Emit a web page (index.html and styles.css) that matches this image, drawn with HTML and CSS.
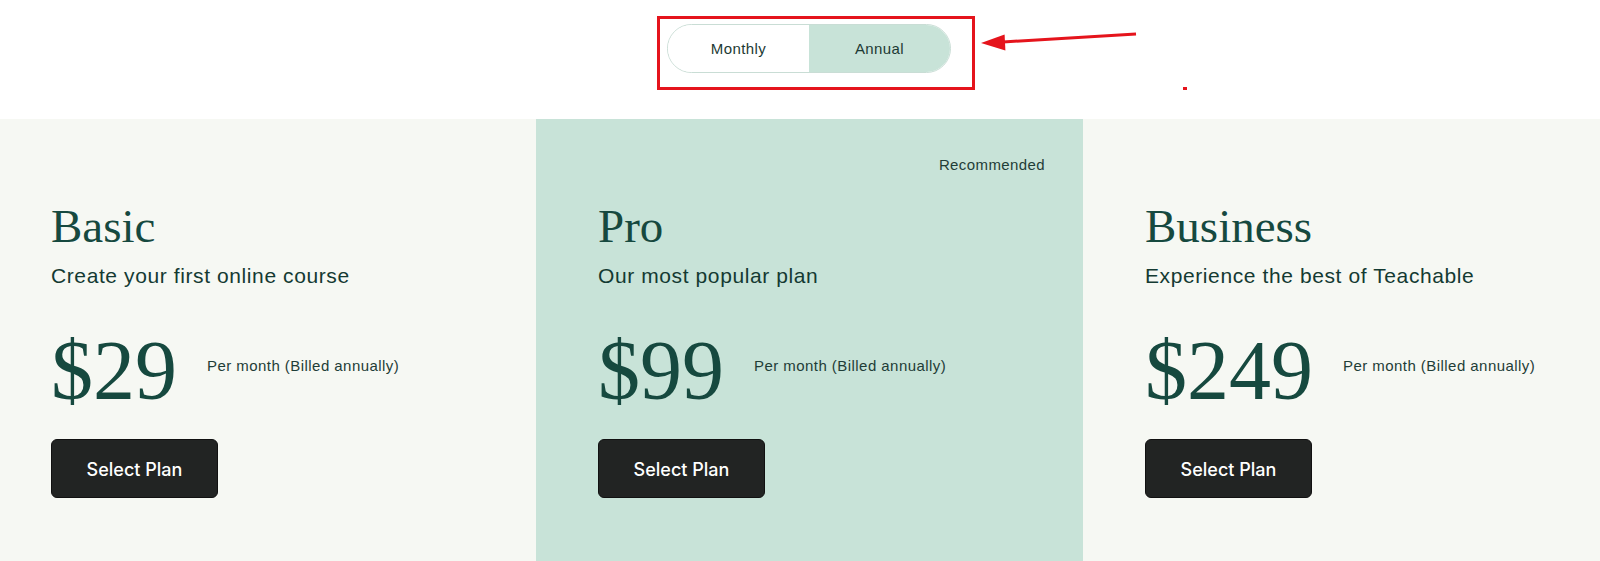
FILE: index.html
```html
<!DOCTYPE html>
<html lang="en">
<head>
<meta charset="UTF-8">
<meta name="viewport" content="width=device-width, initial-scale=1.0">
<title>Pricing</title>
<link rel="stylesheet" href="styles.css">
</head>
<body>

<div class="billing">
    <div class="toggle">
        <span class="toggle-option">Monthly</span>
        <span class="toggle-option active">Annual</span>
    </div>
</div>

<!-- review markup drawn over the page -->
<div class="mark-box"></div>
<svg class="mark-arrow" width="240" height="80" viewBox="0 0 240 80">
    <line x1="161" y1="9" x2="28" y2="17" stroke="#e5141c" stroke-width="3"/>
    <polygon points="6,18 30.4,25.5 29.6,9.5" fill="#e5141c"/>
    <rect x="208" y="62" width="4" height="3" fill="#e5141c"/>
</svg>

<div class="plans">
    <div class="plan plan-basic">
        <h2>Basic</h2>
        <p class="plan-desc">Create your first online course</p>
        <div class="price-row">
            <span class="price">$29</span>
            <span class="price-note">Per month (Billed annually)</span>
        </div>
        <button class="select-btn">Select Plan</button>
    </div>

    <div class="plan plan-pro">
        <span class="badge">Recommended</span>
        <h2>Pro</h2>
        <p class="plan-desc">Our most popular plan</p>
        <div class="price-row">
            <span class="price">$99</span>
            <span class="price-note">Per month (Billed annually)</span>
        </div>
        <button class="select-btn">Select Plan</button>
    </div>

    <div class="plan plan-business">
        <h2>Business</h2>
        <p class="plan-desc">Experience the best of Teachable</p>
        <div class="price-row">
            <span class="price">$249</span>
            <span class="price-note">Per month (Billed annually)</span>
        </div>
        <button class="select-btn">Select Plan</button>
    </div>
</div>

</body>
</html>
```

FILE: styles.css
```css
body {
    font-family: "Liberation Sans", Arial, sans-serif;
    margin: 0;
    padding: 0;
    background-color: #fff;
    color: #173b33;
    position: relative;
    overflow: hidden;
}

.billing {
    height: 119px;
    display: flex;
    justify-content: center;
    align-items: flex-start;
    box-sizing: border-box;
    padding-top: 24px;
}

.toggle {
    display: flex;
    margin-left: 18px;
    border: 1px solid #c9ddd5;
    border-radius: 25px;
    overflow: hidden;
}

.toggle-option {
    width: 141px;
    height: 47px;
    display: flex;
    align-items: center;
    justify-content: center;
    font-size: 15px;
    letter-spacing: 0.4px;
    color: #1d3a34;
    background-color: #fff;
}

.toggle-option.active {
    background-color: #c8e3d8;
}

.mark-box {
    position: absolute;
    left: 657px;
    top: 16px;
    width: 318px;
    height: 74px;
    box-sizing: border-box;
    border: 3px solid #e5141c;
}

.mark-arrow {
    position: absolute;
    left: 975px;
    top: 25px;
}

.plans {
    display: grid;
    grid-template-columns: 536px 547px 1fr;
    min-height: 442px;
    background-color: #f6f8f3;
}

.plan {
    position: relative;
    padding: 84px 0 40px 62px;
}

.plan-basic {
    padding-left: 51px;
}

.plan-pro {
    background-color: #c8e3d8;
}

.badge {
    position: absolute;
    top: 37px;
    right: 38px;
    font-size: 15px;
    letter-spacing: 0.4px;
    color: #1f3d37;
}

.plan h2 {
    margin: 0;
    font-family: "Liberation Serif", "Times New Roman", serif;
    font-weight: normal;
    font-size: 47px;
    line-height: 1;
    color: #16493f;
}

.plan-desc {
    margin: 14px 0 0;
    font-size: 21px;
    line-height: 24px;
    letter-spacing: 0.6px;
    color: #143a32;
}

.price-row {
    display: flex;
    align-items: flex-start;
    margin-top: 41px;
}

.price {
    font-family: "Liberation Serif", "Times New Roman", serif;
    font-size: 84px;
    line-height: 1;
    color: #16493f;
}

.price-note {
    margin: 28px 0 0 30px;
    font-size: 15px;
    line-height: 18px;
    letter-spacing: 0.45px;
    color: #1f3d37;
}

.select-btn {
    margin-top: 26px;
    width: 167px;
    height: 59px;
    display: flex;
    align-items: center;
    justify-content: center;
    padding-top: 2px;
    background-color: #222423;
    border: 1px solid #111;
    border-radius: 6px;
    color: #fff;
    font-family: "Inter", "Liberation Sans", sans-serif;
    font-weight: 500;
    font-size: 18px;
    cursor: pointer;
}
```
